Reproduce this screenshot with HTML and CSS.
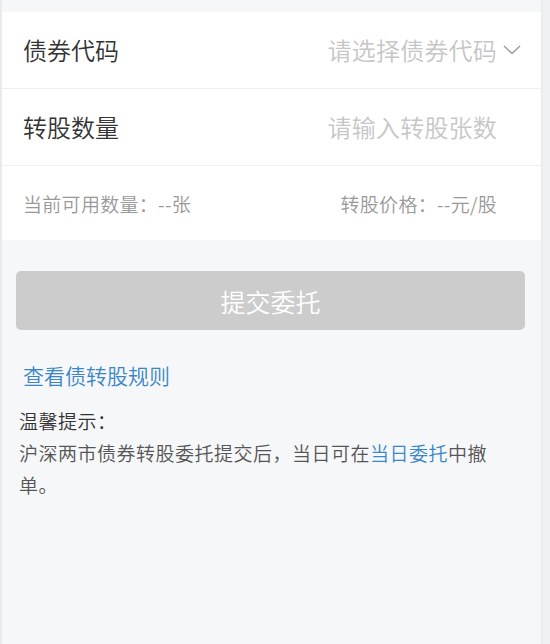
FILE: index.html
```html
<!DOCTYPE html>
<html lang="zh-CN">
<head>
<meta charset="utf-8">
<title>债转股</title>
<link rel="stylesheet" href="styles.css">
</head>
<body>
<div class="screen">
  <main class="main">
    <section class="panel">
      <div class="row">
        <span class="label">债券代码</span>
        <span class="value">
          <span class="placeholder">请选择债券代码</span>
          <svg class="chevron" width="18" height="10" viewBox="0 0 18 10"><polyline points="1,1 9,8.5 17,1" fill="none" stroke="#9a9a9a" stroke-width="1.4"/></svg>
        </span>
      </div>
      <div class="row">
        <span class="label">转股数量</span>
        <span class="value">
          <span class="placeholder">请输入转股张数</span>
          <span class="icon-slot"></span>
        </span>
      </div>
      <div class="row row-info">
        <span class="info">当前可用数量：--张</span>
        <span class="value">
          <span class="info">转股价格：--元/股</span>
          <span class="icon-slot"></span>
        </span>
      </div>
    </section>

    <button class="submit" type="button">提交委托</button>

    <a class="rule-link" href="#">查看债转股规则</a>

    <div class="tips">
      <p class="tips-title">温馨提示：</p>
      <p class="tips-text"><span>沪深两市债券转股委托提交后，当日可在</span><a class="inline-link" href="#">当日委托</a><span>中撤</span><span>单。</span></p>
    </div>
  </main>
  <div class="rail"></div>
</div>
</body>
</html>
```

FILE: styles.css
```css
* {
  box-sizing: border-box;
}

html, body {
  margin: 0;
  padding: 0;
}

body {
  background: #f6f7f9;
  font-family: "Noto Sans CJK SC", "Noto Sans", sans-serif;
  font-weight: 350;
  color: #333;
}

.screen {
  display: flex;
  min-height: 644px;
}

.main {
  flex: 1;
  border-left: 2px solid #e9eaec;
  padding-top: 12px;
  display: flex;
  flex-direction: column;
}

.rail {
  width: 9px;
  background: #eff0f2;
  border-left: 1px solid #e9eaec;
}

.panel {
  background: #ffffff;
}

.row {
  height: 77px;
  display: flex;
  align-items: center;
  justify-content: space-between;
  padding: 0 20px 0 21px;
  border-bottom: 1px solid #efefef;
}

.row-info {
  height: 74px;
  border-bottom: none;
}

.label {
  font-size: 24px;
  color: #333333;
  line-height: 1;
}

.value {
  display: flex;
  align-items: center;
  gap: 6px;
}

.placeholder {
  font-size: 24px;
  color: #c6c6c6;
  line-height: 1;
  letter-spacing: 0.2px;
}

.chevron {
  display: block;
  width: 18px;
  height: 10px;
}

.icon-slot {
  width: 18px;
  height: 10px;
}

.info {
  font-size: 19px;
  color: #999999;
  line-height: 1;
  letter-spacing: 0.3px;
}

.submit {
  margin: 31px 16px 0 14px;
  height: 59px;
  border: none;
  border-radius: 5px;
  background: #cccccc;
  color: #ffffff;
  font-family: "Noto Sans CJK SC", "Noto Sans", sans-serif;
  font-weight: 350;
  font-size: 25px;
  padding: 0;
}

.rule-link {
  margin: 30px 0 0 21px;
  font-size: 21px;
  line-height: 30px;
  color: #3a86c8;
  text-decoration: none;
  align-self: flex-start;
}

.tips {
  margin-top: 15px;
  padding: 0 40px 0 17px;
}

.tips p {
  margin: 0;
  font-size: 19px;
  letter-spacing: 0.5px;
  line-height: 32px;
}

.tips-title {
  color: #333333;
}

.tips-text {
  color: #555555;
}

.inline-link {
  color: #3a86c8;
  text-decoration: none;
}
```
